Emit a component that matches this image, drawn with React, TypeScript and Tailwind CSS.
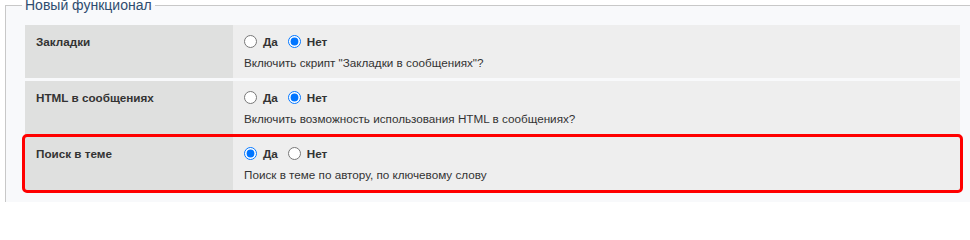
import React from "react"

type Row = {
  label: string
  name: string
  yes: boolean
  hint: string
  marked?: boolean
}

const rows: Row[] = [
  {
    label: "Закладки",
    name: "bookmarks",
    yes: false,
    hint: 'Включить скрипт "Закладки в сообщениях"?',
  },
  {
    label: "HTML в сообщениях",
    name: "html",
    yes: false,
    hint: "Включить возможность использования HTML в сообщениях?",
  },
  {
    label: "Поиск в теме",
    name: "search",
    yes: true,
    hint: "Поиск в теме по автору, по ключевому слову",
    marked: true,
  },
]

const SettingRow = ({ row }: { row: Row }) => {
  return (
    <div
      className={
        row.marked
          ? "flex h-[53px] w-[935px] rounded-[2px] outline-3 outline-[#ff0000]"
          : "flex h-[53px] w-[935px]"
      }
    >
      <div className="w-[208px] shrink-0 bg-[#dfe0df] px-[11px] pt-[10px] text-[11.7px] font-bold leading-[13px] text-[#333]">
        {row.label}
      </div>
      <div className="flex-1 bg-[#eeeeee] pl-[11px] pt-[10px] text-[11.7px] leading-[13px] text-[#333]">
        <div className="flex h-[13px] items-center">
          <input
            type="radio"
            name={row.name}
            defaultChecked={row.yes}
            className="m-0 h-[13px] w-[13px]"
          />
          <span className="ml-[6px] font-bold">Да</span>
          <input
            type="radio"
            name={row.name}
            defaultChecked={!row.yes}
            className="m-0 ml-[10px] h-[13px] w-[13px]"
          />
          <span className="ml-[6px] font-bold">Нет</span>
        </div>
        <div className="mt-[8px]">{row.hint}</div>
      </div>
    </div>
  )
}

export default function App() {
  return (
    <div className="h-[202px] w-[970px] overflow-hidden bg-white font-['Liberation_Sans',Arial,sans-serif]">
      <fieldset className="-mt-[3px] ml-[5px] w-[1000px] border-l border-t border-[#c8c8c8] bg-[#f8f9fb] pb-5 pl-[19px] pt-[12px]">
        <legend className="-ml-[3px] px-[3px] text-[14px] leading-[16px] text-[#2f4d6f]">
          Новый функционал
        </legend>
        <div className="flex flex-col gap-[3px]">
          {rows.map((r) => (
            <SettingRow key={r.name} row={r} />
          ))}
        </div>
      </fieldset>
    </div>
  )
}
